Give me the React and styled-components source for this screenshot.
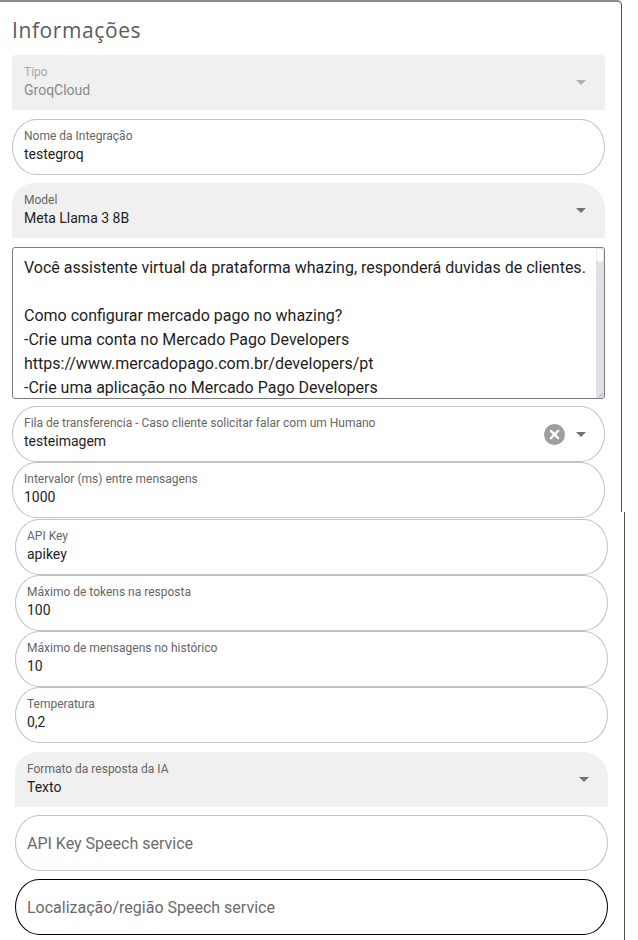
import React from "react";
import styled, { createGlobalStyle } from "styled-components";

const Global = createGlobalStyle`
    html, body {
        margin: 0;
        padding: 0;
        background: #fff;
        overflow: hidden;
        font-family: Roboto, "Liberation Sans", sans-serif;
    }
    * { box-sizing: border-box; }
`;

const Page = styled.div`
    min-height: 100vh;
    display: flex;
    flex-direction: column;
`;

const Upper = styled.section`
    width: 622px;
    padding: 14px 16px 0 12px;
    border-top: 2px solid #8c8c8c;
    border-right: 1px solid #4b5158;
    border-top-right-radius: 5px;
    display: flex;
    flex-direction: column;
    height: 512px;
`;

const Lower = styled.section`
    flex: 1;
    width: 622px;
    margin-left: 3px;
    padding: 7px 16px 0 12px;
    border-right: 1px solid #4b5158;
    display: flex;
    flex-direction: column;
`;

const Title = styled.h2`
    margin: 0 0 11px;
    font-family: "Open Sans", sans-serif;
    font-size: 21px;
    font-weight: 500;
    letter-spacing: 0.6px;
    line-height: 28px;
    color: #5b5b5b;
`;

const Field = styled.div`
    flex: none;
    display: flex;
    align-items: center;
    gap: 11px;
    height: ${p => (p.$filled ? "55px" : "56px")};
    margin-top: ${p => p.$gap || 0}px;
    padding: 0 19px 0 12px;
    background: ${p => (p.$filled ? "#f0f0f0" : "#fff")};
    border: ${p => (p.$filled ? "none" : `1px solid ${p.$focus ? "#000" : "#c2c2c2"}`)};
    border-radius: ${p => (p.$filled ? (p.$disabled ? "4px 4px 0 0" : "22px 26px 0 0") : "24px / 28px")};
    ${p => !p.$filled && "padding-left: 11px; padding-right: 18px;"}
`;

const FieldBody = styled.div`
    flex: 1;
    display: flex;
    flex-direction: column;
    margin-top: -2px;
`;

const Label = styled.span`
    font-size: 12px;
    line-height: 16px;
    color: ${p => (p.$disabled ? "#a8a8a8" : "#666")};
    white-space: nowrap;
`;

const Value = styled.span`
    font-size: 14px;
    line-height: 20px;
    color: ${p => (p.$disabled ? "#8a8a8a" : "#1e1e1e")};
`;

const Placeholder = styled.span`
    font-size: 16px;
    color: #6b6b6b;
`;

const Arrow = styled.span`
    width: 0;
    height: 0;
    border-left: 5px solid transparent;
    border-right: 5px solid transparent;
    border-top: 5px solid ${p => (p.$disabled ? "#b0b0b0" : "#737373")};
`;

const TextBox = styled.div`
    flex: none;
    display: flex;
    height: 152px;
    margin-top: 9px;
    border: 1px solid #7a7a7a;
    border-radius: 3px;
    overflow: hidden;
`;

const TextContent = styled.div`
    flex: 1;
    padding: 8px 11px;
    font-size: 16px;
    line-height: 24px;
    color: #1e1e1e;
    white-space: pre;
    overflow: hidden;
`;

const ScrollTrack = styled.div`
    width: 8px;
    display: flex;
    flex-direction: column;
    justify-content: space-between;
    background: #dde1e6;
`;

const Thumb = styled.div`
    height: 15px;
    background: #fff;
    border: 1px solid #e3e6ea;
    border-radius: 0 3px 4px 4px;
`;

const Grip = styled.svg`
    display: block;
    width: 8px;
    height: 8px;
`;

const ClearIcon = () => (
    <svg width="21" height="21" viewBox="0 0 20 20">
        <circle cx="10" cy="10" r="10" fill="#9e9e9e" />
        <path d="M6.5 6.5l7 7M13.5 6.5l-7 7" stroke="#fff" strokeWidth="2.2" strokeLinecap="round" />
    </svg>
);

const prompt = `Você assistente virtual da prataforma whazing, responderá duvidas de clientes.

Como configurar mercado pago no whazing?
-Crie uma conta no Mercado Pago Developers
https://www.mercadopago.com.br/developers/pt
-Crie uma aplicação no Mercado Pago Developers`;

const LabeledField = ({ label, value, gap, filled, disabled, select, clear }) => (
    <Field $gap={gap} $filled={filled} $disabled={disabled}>
        <FieldBody>
            <Label $disabled={disabled}>{label}</Label>
            <Value $disabled={disabled}>{value}</Value>
        </FieldBody>
        {clear && <ClearIcon />}
        {select && <Arrow $disabled={disabled} />}
    </Field>
);

export default function App() {
    return (
        <Page>
            <Global />
            <Upper>
                <Title>Informações</Title>
                <LabeledField label="Tipo" value="GroqCloud" filled disabled select />
                <LabeledField label="Nome da Integração" value="testegroq" gap={9} />
                <LabeledField label="Model" value="Meta Llama 3 8B" gap={8} filled select />
                <TextBox>
                    <TextContent>{prompt}</TextContent>
                    <ScrollTrack>
                        <Thumb />
                        <Grip viewBox="0 0 8 8">
                            <path d="M7 3L3 7M7 5.5L5.5 7" stroke="#9a9a9a" strokeWidth="0.8" />
                        </Grip>
                    </ScrollTrack>
                </TextBox>
                <LabeledField
                    label="Fila de transferencia - Caso cliente solicitar falar com um Humano"
                    value="testeimagem"
                    gap={7}
                    select
                    clear
                />
                <LabeledField label="Intervalor (ms) entre mensagens" value="1000" />
            </Upper>
            <Lower>
                <LabeledField label="API Key" value="apikey" />
                <LabeledField label="Máximo de tokens na resposta" value="100" />
                <LabeledField label="Máximo de mensagens no histórico" value="10" />
                <LabeledField label="Temperatura" value="0,2" />
                <LabeledField label="Formato da resposta da IA" value="Texto" gap={9} filled select />
                <Field $gap={8}>
                    <Placeholder>API Key Speech service</Placeholder>
                </Field>
                <Field $gap={8} $focus>
                    <Placeholder>Localização/região Speech service</Placeholder>
                </Field>
            </Lower>
        </Page>
    );
}
